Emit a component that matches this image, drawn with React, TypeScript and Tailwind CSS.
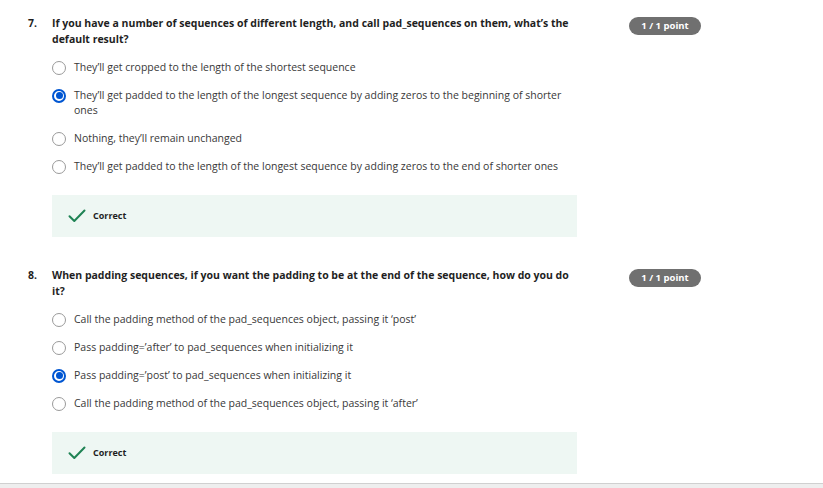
import React from "react";

type Q = {
  num: string;
  title: string;
  options: string[];
  selected: number;
};

const questions: Q[] = [
  {
    num: "7.",
    title:
      "If you have a number of sequences of different length, and call pad_sequences on them, what\u2019s the default result?",
    options: [
      "They\u2019ll get cropped to the length of the shortest sequence",
      "They\u2019ll get padded to the length of the longest sequence by adding zeros to the beginning of shorter ones",
      "Nothing, they\u2019ll remain unchanged",
      "They\u2019ll get padded to the length of the longest sequence by adding zeros to the end of shorter ones",
    ],
    selected: 1,
  },
  {
    num: "8.",
    title:
      "When padding sequences, if you want the padding to be at the end of the sequence, how do you do it?",
    options: [
      "Call the padding method of the pad_sequences object, passing it \u2018post\u2019",
      "Pass padding=\u2019after\u2019 to pad_sequences when initializing it",
      "Pass padding=\u2019post\u2019 to pad_sequences when initializing it",
      "Call the padding method of the pad_sequences object, passing it \u2018after\u2019",
    ],
    selected: 2,
  },
];

function Radio({ checked }: { checked: boolean }) {
  if (checked) {
    return (
      <div className="w-[14px] h-[14px] shrink-0 rounded-full border-[2px] border-[#0056d2] flex items-center justify-center mt-[0.5px]">
        <div className="w-[7px] h-[7px] rounded-full bg-[#0056d2]" />
      </div>
    );
  }
  return (
    <div className="w-[14px] h-[14px] shrink-0 rounded-full border-[1.5px] border-[#9a9a9a] bg-white mt-[0.5px]" />
  );
}

function Question({ q, first }: { q: Q; first: boolean }) {
  return (
    <div className={`flex ${first ? "" : "mt-[30px]"}`}>
      <div className="w-[24px] shrink-0 text-[10.5px] font-bold leading-[16px] text-[#1f1f1f]">
        {q.num}
      </div>
      <div className="w-[525px] shrink-0">
        <div className="text-[10.5px] font-bold leading-[16px] text-[#1f1f1f]">{q.title}</div>
        <div className="mt-[13px] flex flex-col gap-[13px]">
          {q.options.map((o, i) => (
            <div key={i} className="flex items-start gap-[8px]">
              <Radio checked={i === q.selected} />
              <div className="text-[10.5px] leading-[15px] text-[#383838] pr-[10px]">{o}</div>
            </div>
          ))}
        </div>
        <div className="mt-[21px] h-[42px] bg-[#eef7f3] flex items-center pl-[16px]">
          <svg width="18" height="14" viewBox="0 0 18 14" fill="none">
            <path d="M1.5 7.2 L6.3 12 L16.5 1.5" stroke="#1f8354" strokeWidth="2" strokeLinecap="round" strokeLinejoin="round" />
          </svg>
          <span className="ml-[7px] text-[9px] font-bold text-[#1f1f1f]">Correct</span>
        </div>
      </div>
      <div className="ml-[52px] mt-[2px] h-[18px] w-[72px] rounded-full bg-[#707070] flex items-center justify-center text-[9.5px] font-bold text-white">
        1 / 1 point
      </div>
    </div>
  );
}

export default function App() {
  return (
    <div className="w-[823px] h-[488px] bg-white flex flex-col overflow-hidden font-['Open_Sans',sans-serif]">
      <div className="h-[483px] pl-[28px] pt-[15px]">
        {questions.map((q, i) => (
          <Question key={q.num} q={q} first={i === 0} />
        ))}
      </div>
      <div className="flex-1 border-t border-[#d0d0d0] bg-[#eeeeee]" />
    </div>
  );
}
